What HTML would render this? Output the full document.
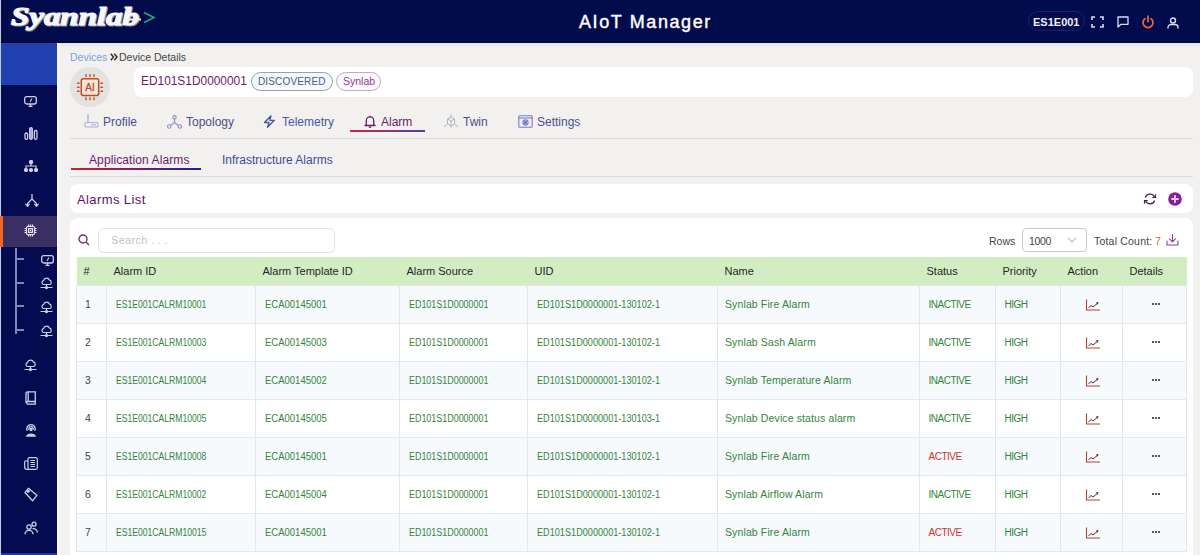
<!DOCTYPE html>
<html><head><meta charset="utf-8">
<style>
*{box-sizing:border-box;margin:0;padding:0}
html,body{width:1200px;height:555px;overflow:hidden;background:#f2f1ef;font-family:"Liberation Sans",sans-serif;position:relative}
.abs{position:absolute}
#hdr{left:0;top:0;width:1200px;height:43px;background:#020b4c}
#side{left:0;top:43px;width:57px;height:512px;background:#040b50}
#blue{left:0;top:43px;width:57px;height:42px;background:#2141b0}
.sic{position:absolute;left:22px;width:16px;height:16px}
.sic svg{width:16px;height:16px;display:block}
#active{left:0;top:216px;width:57px;height:31px;background:#3a2f62;border-left:3px solid #f26522}
.txt{position:absolute;white-space:nowrap;line-height:1}
.card{position:absolute;background:#fff;border-radius:8px}
table{border-collapse:collapse;position:absolute;left:76px;top:257px;table-layout:fixed;width:1111px}
td,th{border:1px solid #e4e8ee;font-weight:normal;text-align:left;white-space:nowrap;padding:0 0 0 7px;overflow:hidden;line-height:1}
th{background:#d3edc3;height:28px;font-size:11px;color:#262626;border:none;padding-top:2px}
td{height:38px;font-size:10px;color:#34843a;padding:1px 0 0 8.5px}
tr.o td{background:#f6fafd}
tr.e td{background:#fff}
td.n{color:#444;font-size:10.5px;padding-left:8px}
td span{display:inline-block;transform-origin:0 50%}
.s1{transform:scaleX(0.86)}
.s2{transform:scaleX(0.95)}
.s3{transform:scaleX(0.893)}
.s4{transform:scaleX(0.914)}
td.nm{font-size:10.5px;padding-left:7px;letter-spacing:0.12px}
td.in,td.ac,td.hi{font-size:10px;letter-spacing:-0.5px;padding-top:2px}
td.ac{color:#d32f2f}
td.ic{text-align:center;padding:2px 0 0 2px}
td.ic svg{display:inline-block;vertical-align:middle}
td.dt{text-align:center;padding:0 0 0 3px}
.dots{display:inline-flex;gap:1.3px;vertical-align:middle;margin-top:-0.5px}
.dots i{display:block;width:2px;height:2px;background:#222;border-radius:1px}
</style></head><body>
<div id="hdr" class="abs"></div>
<div class="abs" style="left:57px;top:43px;width:1143px;height:5px;background:linear-gradient(180deg,#e4e2e8,#f2f1ef)"></div>
<div class="abs" style="left:0;top:41px;width:1200px;height:2px;background:#000838"></div>
<div id="side" class="abs"></div>
<div id="blue" class="abs"></div>
<div class="abs" style="left:0;top:0;width:1px;height:555px;background:#c4cad8"></div>
<div id="active" class="abs"></div>
<div class="abs" style="left:1px;top:553px;width:56px;height:2px;background:#2a3590"></div>
<div class="abs" style="left:57px;top:43px;width:4px;height:512px;background:linear-gradient(90deg,#fafafa,#f2f1ef)"></div>


<!-- logo -->
<svg class="abs" style="left:0;top:0" width="165" height="40" viewBox="0 0 165 40">
<text x="11" y="25" textLength="128" lengthAdjust="spacingAndGlyphs" font-family="Liberation Serif" font-weight="bold" font-style="italic" font-size="25" fill="#8d8d9c" stroke="#8d8d9c" stroke-width="1.2" transform="translate(1,1)">Syannlab</text>
<text x="11" y="25" textLength="128" lengthAdjust="spacingAndGlyphs" font-family="Liberation Serif" font-weight="bold" font-style="italic" font-size="25" fill="#f6f6f6" stroke="#f6f6f6" stroke-width="1.2">Syannlab</text>
<path d="M128 19.5H141" stroke="#f0f0f0" stroke-width="2"/>
<path d="M144 12.5L154 17.5L144 22.5" fill="none" stroke="#2fa27a" stroke-width="1.6"/>
</svg>
<!-- header right -->
<div class="abs" style="left:1028px;top:11px;width:57px;height:20px;border:1px solid #19226e;border-radius:10px"></div>
<div class="txt" style="left:1033px;top:17px;font-size:11px;font-weight:bold;color:#eef">ES1E001</div>
<svg class="abs" style="left:1091px;top:16px" width="13" height="12" viewBox="0 0 13 12" fill="none" stroke="#dcdcf5" stroke-width="1.6"><path d="M1 4V1H4M9 1H12V4M12 8V11H9M4 11H1V8"/></svg>
<svg class="abs" style="left:1117px;top:16px" width="12" height="12" viewBox="0 0 12 12" fill="none" stroke="#dcdcf5" stroke-width="1.3"><path d="M1 1H11V8.3H4L1 11Z" stroke-linejoin="round"/></svg>
<svg class="abs" style="left:1141px;top:15px" width="14" height="14" viewBox="0 0 14 14" fill="none" stroke="#e4643c" stroke-width="1.8" stroke-linecap="round"><path d="M4 3.6A5 5 0 1 0 10 3.6"/><path d="M7 1.2V6.5"/></svg>
<svg class="abs" style="left:1167px;top:17px" width="12" height="12" viewBox="0 0 12 12" fill="none" stroke="#dcdcf5" stroke-width="1.4"><circle cx="6" cy="3.5" r="2.5"/><path d="M1 11.5V10.5A3 3 0 0 1 4 7.5H8A3 3 0 0 1 11 10.5V11.5"/></svg>

<!-- sidebar icons -->
<svg class="abs" style="left:24px;top:96px" width="13" height="11" viewBox="0 0 13 11" fill="none" stroke="#cfcfea" stroke-width="1.3"><rect x="0.7" y="0.7" width="11.6" height="7.3" rx="2"/><path d="M4.5 10.3H8.5M6.5 8V10.3"/><path d="M6 6L8 2.5" stroke-width="1.1"/></svg>
<svg class="abs" style="left:24px;top:127px" width="14" height="13" viewBox="0 0 14 13" fill="none" stroke="#cfcfea" stroke-width="1.3"><rect x="1" y="6" width="2.6" height="6.3" rx="1.3"/><rect x="5.7" y="0.7" width="2.6" height="11.6" rx="1.3" fill="#9a9ac8"/><rect x="10.4" y="3.5" width="2.6" height="8.8" rx="1.3"/></svg>
<svg class="abs" style="left:24px;top:160px" width="14" height="12" viewBox="0 0 14 12" fill="#cfcfea" stroke="#cfcfea" stroke-width="1.2"><circle cx="7" cy="2" r="1.6"/><path d="M7 3.5V6M2 9V6H12V9" fill="none"/><circle cx="2" cy="10" r="1.5"/><circle cx="7" cy="10" r="1.5"/><circle cx="12" cy="10" r="1.5"/></svg>
<svg class="abs" style="left:25px;top:194px" width="14" height="14" viewBox="0 0 14 14" fill="none" stroke="#cfcfea" stroke-width="1.3" stroke-linecap="round"><path d="M7 0.5V5L2.5 9.5V12M7 5L11.5 9.5V12M0.8 10.3L2.5 12.3L4.2 10.3M9.8 10.3L11.5 12.3L13.2 10.3"/></svg>
<svg class="abs" style="left:24px;top:224px" width="13" height="13" viewBox="0 0 13 13" fill="none" stroke="#e8e0f0" stroke-width="1.2"><rect x="2.5" y="2.5" width="8" height="8" rx="1.2"/><rect x="4.6" y="4.6" width="3.8" height="3.8" fill="none"/><rect x="5.8" y="5.8" width="1.4" height="1.4" fill="#e8e0f0" stroke="none"/><path d="M4.5 0.5V2M6.5 0.5V2M8.5 0.5V2M4.5 11V12.5M6.5 11V12.5M8.5 11V12.5M0.5 4.5H2M0.5 6.5H2M0.5 8.5H2M11 4.5H12.5M11 6.5H12.5M11 8.5H12.5"/></svg>

<!-- tree -->
<div class="abs" style="left:15px;top:248px;width:1.5px;height:86px;background:#8286b0"></div>
<div class="abs" style="left:16px;top:258px;width:8px;height:1.5px;background:#8286b0"></div>
<div class="abs" style="left:16px;top:282px;width:8px;height:1.5px;background:#8286b0"></div>
<div class="abs" style="left:16px;top:305px;width:8px;height:1.5px;background:#8286b0"></div>
<div class="abs" style="left:16px;top:329px;width:8px;height:1.5px;background:#8286b0"></div>
<svg class="abs" style="left:41px;top:255px" width="13" height="11" viewBox="0 0 13 11" fill="none" stroke="#cfcfea" stroke-width="1.3"><rect x="0.7" y="0.7" width="11.6" height="7.3" rx="2"/><path d="M4.5 10.3H8.5M6.5 8V10.3"/><path d="M6 6L8 2.5" stroke-width="1.1"/></svg><svg class="abs" style="left:40px;top:277px" width="13" height="13" viewBox="0 0 13 13" fill="none" stroke="#cfcfea" stroke-width="1.2"><path d="M3.5 7.5H9.5A2.2 2.2 0 0 0 9.6 3.2A3.2 3.2 0 0 0 3.5 3.6A2 2 0 0 0 3.5 7.5Z"/><path d="M6.5 7.5V10.5M0.5 10.5H12.5"/><circle cx="6.5" cy="10.6" r="1" fill="#cfcfea"/></svg><svg class="abs" style="left:40px;top:301px" width="13" height="13" viewBox="0 0 13 13" fill="none" stroke="#cfcfea" stroke-width="1.2"><path d="M3.5 7.5H9.5A2.2 2.2 0 0 0 9.6 3.2A3.2 3.2 0 0 0 3.5 3.6A2 2 0 0 0 3.5 7.5Z"/><path d="M6.5 7.5V10.5M0.5 10.5H12.5"/><circle cx="6.5" cy="10.6" r="1" fill="#cfcfea"/></svg><svg class="abs" style="left:40px;top:325px" width="13" height="13" viewBox="0 0 13 13" fill="none" stroke="#cfcfea" stroke-width="1.2"><path d="M3.5 7.5H9.5A2.2 2.2 0 0 0 9.6 3.2A3.2 3.2 0 0 0 3.5 3.6A2 2 0 0 0 3.5 7.5Z"/><path d="M6.5 7.5V10.5M0.5 10.5H12.5"/><circle cx="6.5" cy="10.6" r="1" fill="#cfcfea"/></svg><svg class="abs" style="left:24px;top:359px" width="13" height="13" viewBox="0 0 13 13" fill="none" stroke="#cfcfea" stroke-width="1.2"><path d="M3.5 7.5H9.5A2.2 2.2 0 0 0 9.6 3.2A3.2 3.2 0 0 0 3.5 3.6A2 2 0 0 0 3.5 7.5Z"/><path d="M6.5 7.5V10.5M0.5 10.5H12.5"/><circle cx="6.5" cy="10.6" r="1" fill="#cfcfea"/></svg>
<svg class="abs" style="left:25px;top:391px" width="12" height="14" viewBox="0 0 12 14" fill="none" stroke="#cfcfea" stroke-width="1.3"><path d="M2.5 0.8H10.3V10.5H2.5A1.6 1.6 0 0 0 2.5 13.2H10.3V10.5M1 12V2.3A1.5 1.5 0 0 1 2.5 0.8"/><path d="M3.2 1V10.4"/></svg>
<svg class="abs" style="left:24px;top:423px" width="14" height="14" viewBox="0 0 14 14" fill="none" stroke="#cfcfea" stroke-width="1.3"><path d="M3.3 7.8A4.2 4.2 0 1 1 10.7 7.8"/><path d="M5 6.8A2.2 2.2 0 1 1 9 6.8"/><circle cx="7" cy="6.5" r="1" fill="#cfcfea"/><path d="M2.8 13A4.5 3 0 0 1 11.2 13Z" fill="#cfcfea"/></svg>
<svg class="abs" style="left:24px;top:457px" width="14" height="13" viewBox="0 0 14 13" fill="none" stroke="#cfcfea" stroke-width="1.2"><rect x="4" y="0.7" width="9.3" height="11.6" rx="1.5"/><path d="M4 4H1.5A0.8 0.8 0 0 0 0.7 4.8V10.5A1.8 1.8 0 0 0 2.5 12.3H5"/><path d="M6.5 3.5H11M6.5 5.5H11M6.5 7.5H11M6.5 9.5H11"/></svg>
<svg class="abs" style="left:24px;top:487px" width="14" height="15" viewBox="0 0 14 15" fill="none" stroke="#cfcfea" stroke-width="1.3"><path d="M1 5.5L4.5 1.3L12.8 8.3L8.5 13.8Z" stroke-linejoin="round"/><circle cx="4.3" cy="4.3" r="0.9" fill="#cfcfea"/></svg>
<svg class="abs" style="left:24px;top:521px" width="14" height="14" viewBox="0 0 14 14" fill="none" stroke="#cfcfea" stroke-width="1.3"><circle cx="5" cy="6" r="2.2"/><circle cx="10" cy="3.2" r="2"/><path d="M1 13.3A4 4 0 0 1 9 13.3M8.5 7.8A3.8 3.8 0 0 1 13.3 11.5"/></svg>

<!-- header text -->
<div class="txt" style="left:579px;top:13px;font-size:18px;color:#fff;letter-spacing:1.6px;-webkit-text-stroke:0.4px #fff">AIoT Manager</div>

<!-- breadcrumb -->
<div class="txt" style="left:70px;top:52px;font-size:10.5px;color:#78a2da">Devices</div>
<svg class="abs" style="left:110px;top:53px" width="8" height="8" viewBox="0 0 8 8" fill="none" stroke="#333" stroke-width="1.5"><path d="M0.8 0.8L3.5 4L0.8 7.2M4.3 0.8L7 4L4.3 7.2"/></svg>
<div class="txt" style="left:119px;top:52px;font-size:10.5px;color:#444">Device Details</div>

<!-- avatar -->
<div class="abs" style="left:70px;top:67px;width:40px;height:40px;border-radius:50%;background:#e4e2e0"></div>

<!-- name card -->
<div class="card" style="left:134px;top:67px;width:1059px;height:30px"></div>
<div class="txt" style="left:141px;top:74px;font-size:13px;color:#6a1b6e;transform:scaleX(0.915);transform-origin:0 50%">ED101S1D0000001</div>

<!-- tabs line -->
<div class="abs" style="left:70px;top:138px;width:1123px;height:1px;background:#dddbd9"></div>
<div class="abs" style="left:350px;top:130px;width:75px;height:2px;background:linear-gradient(90deg,#d4263a,#4a3fa0)"></div>

<!-- subtabs -->
<div class="txt" style="left:89px;top:154px;font-size:12px;color:#6a1b6e;letter-spacing:0.1px">Application Alarms</div>
<div class="txt" style="left:222px;top:154px;font-size:12px;color:#3d4aa0">Infrastructure Alarms</div>
<div class="abs" style="left:71px;top:168px;width:130px;height:2px;background:linear-gradient(90deg,#d4202a,#1a1fa8)"></div>
<div class="abs" style="left:70px;top:176px;width:1123px;height:1px;background:#dddbd9"></div>

<!-- alarms list card -->
<div class="card" style="left:70px;top:184px;width:1123px;height:29px"></div>
<div class="txt" style="left:77px;top:193px;font-size:13px;color:#5a1466;letter-spacing:0.4px">Alarms List</div>

<!-- table card -->
<div class="card" style="left:70px;top:218px;width:1123px;height:360px;border-radius:8px 8px 0 0"></div>


<!-- avatar chip -->
<svg class="abs" style="left:76px;top:73px" width="28" height="28" viewBox="0 0 28 28">
<rect x="5.3" y="5.8" width="17.4" height="16.6" rx="2" fill="#f3e6e0" stroke="#c24a1e" stroke-width="1.5"/>
<g stroke="#c24a1e" stroke-width="1.5" stroke-linecap="round"><path d="M10 1.8V3.2M14 1.8V3.2M18 1.8V3.2M10 25V26.4M14 25V26.4M18 25V26.4M1.6 10.3H3M1.6 14.2H3M1.6 18.2H3M25 10.3H26.4M25 14.2H26.4M25 18.2H26.4"/></g>
<text x="14" y="18.3" text-anchor="middle" font-family="Liberation Sans" font-size="10" fill="#c24a1e" stroke="#c24a1e" stroke-width="0.3">AI</text>
</svg>

<!-- pills -->
<div class="abs" style="left:251px;top:72px;width:82px;height:19px;border:1px solid #9a9fa8;border-radius:10px;background:#f5f8fc"></div>
<div class="txt" style="left:258px;top:77px;font-size:10px;color:#4d5b80;letter-spacing:0.15px">DISCOVERED</div>
<div class="abs" style="left:336px;top:72px;width:45px;height:19px;border:1px solid #bfa9c6;border-radius:10px;background:#fdf9fd"></div>
<div class="txt" style="left:343px;top:76px;font-size:10.5px;color:#8a3a9a">Synlab</div>

<!-- tabs -->
<div class="txt" style="left:103px;top:116px;font-size:12px;color:#4a4f8c">Profile</div>
<div class="txt" style="left:186px;top:116px;font-size:12px;color:#4a4f8c">Topology</div>
<div class="txt" style="left:282px;top:116px;font-size:12px;color:#4a55a0">Telemetry</div>
<div class="txt" style="left:381px;top:116px;font-size:12px;color:#6a1a6e">Alarm</div>
<div class="txt" style="left:463px;top:116px;font-size:12px;color:#4a4f8c">Twin</div>
<div class="txt" style="left:537px;top:116px;font-size:12px;color:#4a4f8c">Settings</div>
<svg class="abs" style="left:84px;top:114px" width="15" height="14" viewBox="0 0 15 14" fill="none" stroke="#a9aed6" stroke-width="1.1"><rect x="1" y="8.5" width="13" height="4.5" rx="1"/><path d="M3 1H5M4 1V8.5M3 4H5"/><path d="M7 10.8H12"/></svg>
<svg class="abs" style="left:167px;top:115px" width="15" height="14" viewBox="0 0 15 14" fill="none" stroke="#8d92c4" stroke-width="1.1"><circle cx="7.5" cy="2.3" r="1.7"/><circle cx="2.2" cy="11.5" r="1.7"/><circle cx="12.8" cy="11.5" r="1.7"/><path d="M7.5 4V7.5L3.6 10.5M7.5 7.5L11.4 10.5"/></svg>
<svg class="abs" style="left:263px;top:115px" width="13" height="13" viewBox="0 0 13 13" fill="none" stroke="#4a55a0" stroke-width="1.3" stroke-linejoin="round"><path d="M8 0.8L1.5 7.5H6L4.5 12.3L11.3 5.3H6.8Z"/></svg>
<svg class="abs" style="left:364px;top:115px" width="12" height="13" viewBox="0 0 12 13" fill="none" stroke="#6a1a6e" stroke-width="1.3"><path d="M2.3 9.5V5.5A3.7 3.7 0 0 1 9.7 5.5V9.5L11 10.5H1Z" stroke-linejoin="round"/><path d="M4.8 12.2H7.2"/><path d="M6 0.8V1.8"/></svg>
<svg class="abs" style="left:443px;top:114px" width="16" height="14" viewBox="0 0 16 14" fill="none" stroke="#b0b3cc" stroke-width="1"><path d="M8 0.5V3M4.5 5L8 3L11.5 5L8 7Z M4.5 5V10L8 12V7M11.5 5V10L8 12M4.5 10L1 13M11.5 10L15 13M8 12V13.5"/></svg>
<svg class="abs" style="left:518px;top:115px" width="15" height="13" viewBox="0 0 15 13" fill="none" stroke="#7d82b8" stroke-width="1.1"><rect x="0.8" y="0.8" width="13.4" height="11.4" rx="0.8" fill="#eceef8"/><path d="M0.8 3H14.2"/><circle cx="7.5" cy="7.5" r="2.6"/><circle cx="7.5" cy="7.5" r="1.2" fill="#5a5fa8"/></svg>

<!-- alarms list icons -->
<svg class="abs" style="left:1143px;top:193px" width="14" height="12" viewBox="0 0 14 12" fill="none" stroke="#4e1f5e" stroke-width="1.2"><path d="M2.3 4.5A5 5 0 0 1 11.5 4"/><path d="M11.7 7.5A5 5 0 0 1 2.5 8"/><path d="M12.5 1.2V4.5H9.2" stroke-linejoin="miter"/><path d="M1.5 10.8V7.5H4.8"/></svg>
<svg class="abs" style="left:1168px;top:192px" width="14" height="14" viewBox="0 0 14 14"><circle cx="7" cy="7" r="6.8" fill="#8c1a9c"/><path d="M7 3.3V10.7M3.3 7H10.7" stroke="#f8d8f8" stroke-width="1.9"/></svg>

<!-- search row -->
<svg class="abs" style="left:78px;top:234px" width="12" height="12" viewBox="0 0 12 12" fill="none" stroke="#6a2a72" stroke-width="1.3"><circle cx="5" cy="5" r="4"/><path d="M8 8L11 11"/></svg>
<div class="abs" style="left:98px;top:228px;width:237px;height:25px;border:1px solid #e2e2e2;border-radius:6px;background:#fff"></div>
<div class="txt" style="left:111px;top:235px;font-size:11px;color:#c4c4c4;letter-spacing:0.3px">Search . . .</div>

<div class="txt" style="left:989px;top:236px;font-size:10.5px;color:#444">Rows</div>
<div class="abs" style="left:1022px;top:228px;width:65px;height:24px;border:1px solid #c9c9c9;border-radius:4px;background:#fff"></div>
<div class="txt" style="left:1029px;top:236px;font-size:10.5px;color:#444;letter-spacing:-0.3px">1000</div>
<svg class="abs" style="left:1067px;top:237px" width="10" height="6" viewBox="0 0 10 6" fill="none" stroke="#c0c0c0" stroke-width="1.2"><path d="M1 1L5 5L9 1"/></svg>
<div class="txt" style="left:1094px;top:236px;font-size:10.5px;color:#444;letter-spacing:0.2px">Total Count:</div>
<div class="txt" style="left:1155px;top:236px;font-size:10.5px;color:#e06a2a">7</div>
<svg class="abs" style="left:1166px;top:234px" width="13" height="12" viewBox="0 0 13 12" fill="none" stroke="#8a3e98" stroke-width="1.1" stroke-linecap="round" stroke-linejoin="round"><path d="M6.5 0.5V7.5M3.5 4.8L6.5 7.8L9.5 4.8"/><path d="M1 7V11H12V7"/></svg>

<table id="tbl"><colgroup><col style="width:30px"><col style="width:149px"><col style="width:144px"><col style="width:128px"><col style="width:190px"><col style="width:202px"><col style="width:76px"><col style="width:65px"><col style="width:62px"><col style="width:64px"></colgroup>
<tr><th>#</th><th>Alarm ID</th><th>Alarm Template ID</th><th>Alarm Source</th><th>UID</th><th>Name</th><th>Status</th><th>Priority</th><th>Action</th><th>Details</th></tr>
<tr class="o"><td class="n">1</td><td><span class="s1">ES1E001CALRM10001</span></td><td><span class="s2">ECA00145001</span></td><td><span class="s3">ED101S1D0000001</span></td><td><span class="s4">ED101S1D0000001-130102-1</span></td><td class="nm">Synlab Fire Alarm</td><td class="in">INACTIVE</td><td class="hi">HIGH</td><td class="ic"><svg width="16" height="12" viewBox="0 0 16 12"><path d="M1.5 0.5V11H15" fill="none" stroke="#a8452c" stroke-width="1.1"/><path d="M3.5 9L6 6.5L8 8L12.3 4.5" fill="none" stroke="#5a2a2a" stroke-width="1"/><path d="M10.8 3.6L13.5 3L12.8 5.7Z" fill="#5a2a2a"/></svg></td><td class="dt"><span class="dots"><i></i><i></i><i></i></span></td></tr>
<tr class="e"><td class="n">2</td><td><span class="s1">ES1E001CALRM10003</span></td><td><span class="s2">ECA00145003</span></td><td><span class="s3">ED101S1D0000001</span></td><td><span class="s4">ED101S1D0000001-130102-1</span></td><td class="nm">Synlab Sash Alarm</td><td class="in">INACTIVE</td><td class="hi">HIGH</td><td class="ic"><svg width="16" height="12" viewBox="0 0 16 12"><path d="M1.5 0.5V11H15" fill="none" stroke="#a8452c" stroke-width="1.1"/><path d="M3.5 9L6 6.5L8 8L12.3 4.5" fill="none" stroke="#5a2a2a" stroke-width="1"/><path d="M10.8 3.6L13.5 3L12.8 5.7Z" fill="#5a2a2a"/></svg></td><td class="dt"><span class="dots"><i></i><i></i><i></i></span></td></tr>
<tr class="o"><td class="n">3</td><td><span class="s1">ES1E001CALRM10004</span></td><td><span class="s2">ECA00145002</span></td><td><span class="s3">ED101S1D0000001</span></td><td><span class="s4">ED101S1D0000001-130102-1</span></td><td class="nm">Synlab Temperature Alarm</td><td class="in">INACTIVE</td><td class="hi">HIGH</td><td class="ic"><svg width="16" height="12" viewBox="0 0 16 12"><path d="M1.5 0.5V11H15" fill="none" stroke="#a8452c" stroke-width="1.1"/><path d="M3.5 9L6 6.5L8 8L12.3 4.5" fill="none" stroke="#5a2a2a" stroke-width="1"/><path d="M10.8 3.6L13.5 3L12.8 5.7Z" fill="#5a2a2a"/></svg></td><td class="dt"><span class="dots"><i></i><i></i><i></i></span></td></tr>
<tr class="e"><td class="n">4</td><td><span class="s1">ES1E001CALRM10005</span></td><td><span class="s2">ECA00145005</span></td><td><span class="s3">ED101S1D0000001</span></td><td><span class="s4">ED101S1D0000001-130103-1</span></td><td class="nm">Synlab Device status alarm</td><td class="in">INACTIVE</td><td class="hi">HIGH</td><td class="ic"><svg width="16" height="12" viewBox="0 0 16 12"><path d="M1.5 0.5V11H15" fill="none" stroke="#a8452c" stroke-width="1.1"/><path d="M3.5 9L6 6.5L8 8L12.3 4.5" fill="none" stroke="#5a2a2a" stroke-width="1"/><path d="M10.8 3.6L13.5 3L12.8 5.7Z" fill="#5a2a2a"/></svg></td><td class="dt"><span class="dots"><i></i><i></i><i></i></span></td></tr>
<tr class="o"><td class="n">5</td><td><span class="s1">ES1E001CALRM10008</span></td><td><span class="s2">ECA00145001</span></td><td><span class="s3">ED101S1D0000001</span></td><td><span class="s4">ED101S1D0000001-130102-1</span></td><td class="nm">Synlab Fire Alarm</td><td class="ac">ACTIVE</td><td class="hi">HIGH</td><td class="ic"><svg width="16" height="12" viewBox="0 0 16 12"><path d="M1.5 0.5V11H15" fill="none" stroke="#a8452c" stroke-width="1.1"/><path d="M3.5 9L6 6.5L8 8L12.3 4.5" fill="none" stroke="#5a2a2a" stroke-width="1"/><path d="M10.8 3.6L13.5 3L12.8 5.7Z" fill="#5a2a2a"/></svg></td><td class="dt"><span class="dots"><i></i><i></i><i></i></span></td></tr>
<tr class="e"><td class="n">6</td><td><span class="s1">ES1E001CALRM10002</span></td><td><span class="s2">ECA00145004</span></td><td><span class="s3">ED101S1D0000001</span></td><td><span class="s4">ED101S1D0000001-130102-1</span></td><td class="nm">Synlab Airflow Alarm</td><td class="in">INACTIVE</td><td class="hi">HIGH</td><td class="ic"><svg width="16" height="12" viewBox="0 0 16 12"><path d="M1.5 0.5V11H15" fill="none" stroke="#a8452c" stroke-width="1.1"/><path d="M3.5 9L6 6.5L8 8L12.3 4.5" fill="none" stroke="#5a2a2a" stroke-width="1"/><path d="M10.8 3.6L13.5 3L12.8 5.7Z" fill="#5a2a2a"/></svg></td><td class="dt"><span class="dots"><i></i><i></i><i></i></span></td></tr>
<tr class="o"><td class="n">7</td><td><span class="s1">ES1E001CALRM10015</span></td><td><span class="s2">ECA00145001</span></td><td><span class="s3">ED101S1D0000001</span></td><td><span class="s4">ED101S1D0000001-130102-1</span></td><td class="nm">Synlab Fire Alarm</td><td class="ac">ACTIVE</td><td class="hi">HIGH</td><td class="ic"><svg width="16" height="12" viewBox="0 0 16 12"><path d="M1.5 0.5V11H15" fill="none" stroke="#a8452c" stroke-width="1.1"/><path d="M3.5 9L6 6.5L8 8L12.3 4.5" fill="none" stroke="#5a2a2a" stroke-width="1"/><path d="M10.8 3.6L13.5 3L12.8 5.7Z" fill="#5a2a2a"/></svg></td><td class="dt"><span class="dots"><i></i><i></i><i></i></span></td></tr>
</table>
</body></html>
